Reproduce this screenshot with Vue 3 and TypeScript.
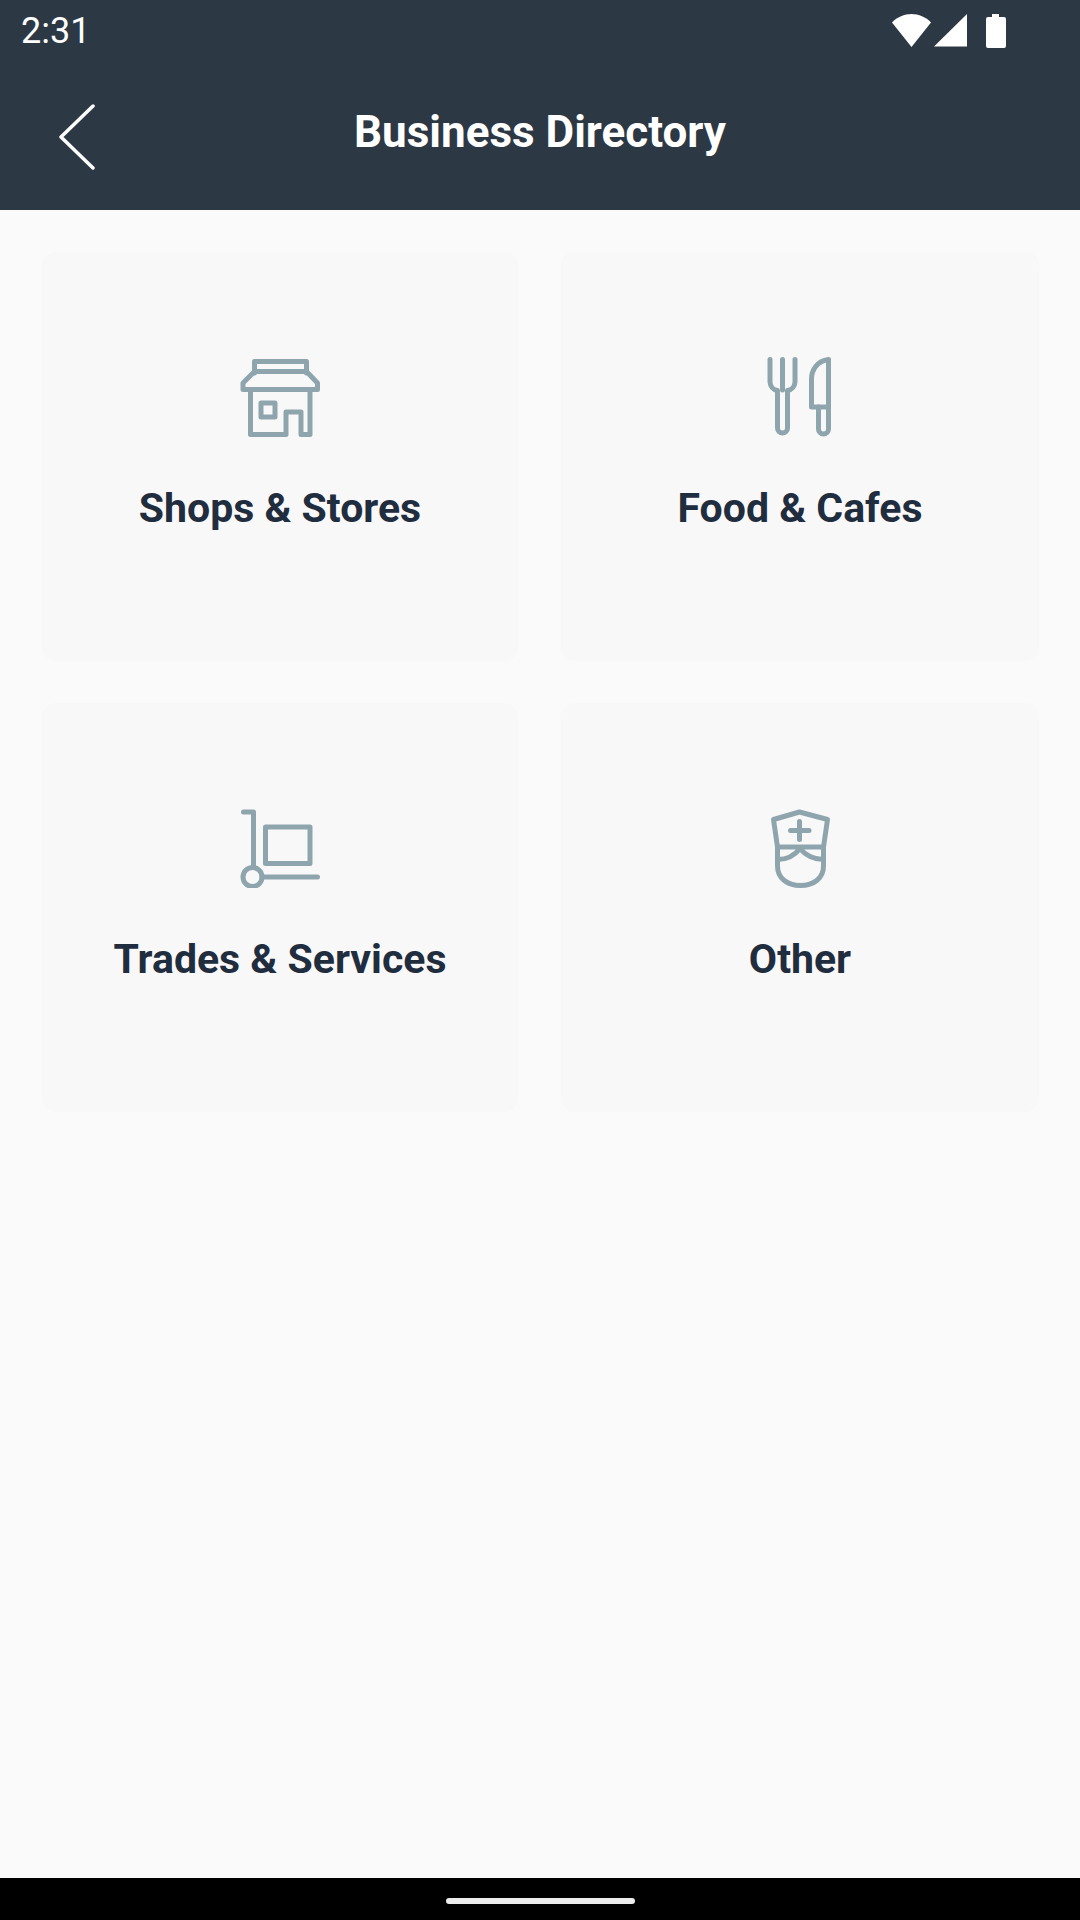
<script setup lang="ts">
interface Category {
  label: string;
  icon: 'shop' | 'food' | 'trades' | 'other';
}

const categories: Category[] = [
  { label: 'Shops & Stores', icon: 'shop' },
  { label: 'Food & Cafes', icon: 'food' },
  { label: 'Trades & Services', icon: 'trades' },
  { label: 'Other', icon: 'other' },
];
</script>

<template>
  <div class="page">
    <header class="app-header">
      <div class="status-bar">
        <span class="status-bar__time">2:31</span>
        <svg class="status-bar__icons" width="114" height="36" viewBox="0 0 114 36">
          <path d="M0 9.5C5 4 12.5 1 19.5 1S34 4 39 9.5L19.5 34Z" fill="#fff" />
          <path d="M42 33.5 75 1V33.5Z" fill="#fff" />
          <path d="M100 1h7v3h5a2 2 0 0 1 2 2v27a2 2 0 0 1-2 2H96a2 2 0 0 1-2-2V6a2 2 0 0 1 2-2h4Z" fill="#fff" />
        </svg>
      </div>
      <div class="toolbar">
        <svg class="toolbar__back" width="38" height="66" viewBox="0 0 38 66">
          <path d="M35 2 3 33l32 31" fill="none" stroke="#fff" stroke-width="3.5" stroke-linecap="round" stroke-linejoin="round" />
        </svg>
        <h1 class="toolbar__title">Business Directory</h1>
      </div>
    </header>

    <main class="directory">
      <div v-for="item in categories" :key="item.label" class="card">
        <svg class="card__icon" width="80" height="80" viewBox="0 0 80 80">
          <g v-if="item.icon === 'shop'">
            <path d="M14.5 16V4.5h52V16" />
            <path d="M14.5 14.5h52L77.5 26v6.5H3V26Z" />
            <path d="M10.5 32.5v45h35.5V55h15v22.5h9v-45" />
            <rect x="21" y="46" width="14" height="14" />
          </g>
          <g v-else-if="item.icon === 'food'">
            <path d="M10 2.5V25a9 9 0 0 0 7.5 8.5V71a5 5 0 0 0 10 0V33.5A9 9 0 0 0 35 25V2.5" />
            <path d="M22.5 2.5V33" />
            <path d="M68.5 2.5C57 4 51.5 13 51.5 22V50H68.5Z" />
            <path d="M58.5 50V72a5 5 0 0 0 10 0V50" />
          </g>
          <g v-else-if="item.icon === 'trades'">
            <path d="M3.5 4H13.5V59.5" />
            <circle cx="12.5" cy="69" r="9.5" />
            <path d="M22 69H77.5" />
            <rect x="25.5" y="19" width="44.5" height="36.5" />
          </g>
          <g v-else>
            <path d="M39.5 4 13.5 11.5 17.5 39H63.5L67.5 11.5Z" />
            <path d="M17.5 39V58C17.5 70 27 77.5 40.5 77.5S63.5 70 63.5 58V39" />
            <path d="M17.5 51.5C27 51.5 35 47 40 40.5 45 47 54 51.5 63.5 51.5" />
            <path d="M30.5 22.5H49M39.5 13.5V31.5" />
          </g>
        </svg>
        <span class="card__label">{{ item.label }}</span>
      </div>
    </main>

    <footer class="nav-bar">
      <div class="nav-bar__handle"></div>
    </footer>
  </div>
</template>

<style scoped>
.page {
  display: flex;
  flex-direction: column;
  width: 1080px;
  height: 1920px;
  overflow: hidden;
  background: #fafafa;
  font-family: Roboto, "Liberation Sans", sans-serif;
}

.app-header {
  height: 210px;
  background: #2c3844;
  color: #fff;
}

.status-bar {
  display: flex;
  align-items: center;
  justify-content: space-between;
  height: 63px;
  padding: 0 74px 0 21px;
}

.status-bar__time {
  font-size: 36px;
  line-height: 63px;
}

.status-bar__icons {
  display: block;
  margin-top: -1px;
}

.toolbar {
  position: relative;
  display: flex;
  align-items: center;
  justify-content: center;
  height: 147px;
}

.toolbar__back {
  position: absolute;
  left: 58px;
  top: 41px;
}

.toolbar__title {
  margin: -10px 0 0;
  font-size: 44px;
  font-weight: 700;
  line-height: 1;
}

.directory {
  display: grid;
  flex: 1;
  grid-template-columns: 476px 478px;
  grid-auto-rows: 409px;
  align-content: start;
  gap: 42px 43px;
  padding: 42px 41px 0 42px;
}

.card {
  display: flex;
  flex-direction: column;
  align-items: center;
  padding-top: 105px;
  background: #f8f8f8;
  border-radius: 14px;
}

.card__icon {
  display: block;
  fill: none;
  stroke: #8fa5ad;
  stroke-width: 5;
  stroke-linecap: round;
  stroke-linejoin: round;
}

.card__label {
  margin-top: 47px;
  color: #1f2d3f;
  font-size: 41px;
  font-weight: 700;
  line-height: 48px;
}

.nav-bar {
  display: flex;
  justify-content: center;
  height: 42px;
  padding-top: 20px;
  box-sizing: border-box;
  background: #000;
}

.nav-bar__handle {
  width: 189px;
  height: 6px;
  border-radius: 3px;
  background: #ececec;
}
</style>
